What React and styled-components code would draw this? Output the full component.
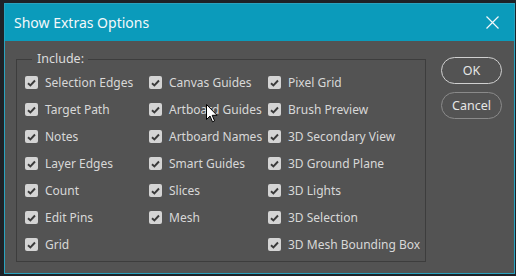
import React from "react";
import styled, { createGlobalStyle } from "styled-components";

const Global = createGlobalStyle`
  html, body { margin: 0; padding: 0; background: #1e2227; }
  body { font-family: "Noto Sans", "Open Sans", sans-serif; }
`;

const columns = [
  ["Selection Edges", "Target Path", "Notes", "Layer Edges", "Count", "Edit Pins", "Grid"],
  ["Canvas Guides", "Artboard Guides", "Artboard Names", "Smart Guides", "Slices", "Mesh"],
  [
    "Pixel Grid",
    "Brush Preview",
    "3D Secondary View",
    "3D Ground Plane",
    "3D Lights",
    "3D Selection",
    "3D Mesh Bounding Box",
  ],
];

const Window = styled.div`
  position: relative;
  margin: 3px 1px 0 4px;
  width: 509px;
  height: 269px;
  border: 1px solid #2aa3bf;
  background: #535353;
  display: flex;
  flex-direction: column;
`;

const TitleBar = styled.div`
  height: 37px;
  background: #0b9bbb;
  display: flex;
  align-items: center;
  justify-content: space-between;
  padding: 0 15px 0 9px;
  color: #f4f8fa;
  font-size: 14px;
`;

const Body = styled.div`
  flex: 1;
  display: flex;
  padding: 11px 0 0 11px;
  gap: 15px;
`;

const Group = styled.fieldset`
  margin: 0;
  width: 410px;
  height: 210px;
  box-sizing: border-box;
  border: 1px solid #3d3d3d;
  padding: 3px 0 0 8px;
  display: grid;
  grid-template-columns: 124px 119px 1fr;
  align-content: start;
`;

const Legend = styled.legend`
  margin-left: 7px;
  padding: 0 4px 0 5px;
  color: #dcdcdc;
  font-size: 12.5px;
  line-height: 14px;
`;

const Column = styled.div`
  display: flex;
  flex-direction: column;
`;

const Row = styled.label`
  height: 27px;
  display: flex;
  align-items: center;
  gap: 7px;
  color: #d8d8d8;
  font-size: 12px;
  white-space: nowrap;
`;

const Box = styled.span`
  width: 13px;
  height: 13px;
  border-radius: 2px;
  background: #d4d4d4;
  display: flex;
  align-items: center;
  justify-content: center;
  flex: none;
`;

const Buttons = styled.div`
  display: flex;
  flex-direction: column;
  gap: 8px;
  padding-top: 5px;
`;

const Button = styled.button`
  width: 61px;
  height: 27px;
  border-radius: 14px;
  background: transparent;
  border: 1px solid ${(p) => (p.$primary ? "#d0d0d0" : "#8a8a8a")};
  color: #e6e6e6;
  font-family: inherit;
  font-size: 12.5px;
  padding: 0;
`;

const Cursor = styled.svg`
  position: absolute;
  left: 201px;
  top: 100px;
`;

const Check = () => (
  <svg width="9" height="8" viewBox="0 0 9 8">
    <path d="M1 4.2 L3.4 6.5 L8 1.5" fill="none" stroke="#3a3a3a" strokeWidth="1.9" />
  </svg>
);

export default function App() {
  return (
    <>
      <Global />
      <Window>
        <TitleBar>
          <span>Show Extras Options</span>
          <svg width="13" height="13" viewBox="0 0 13 13">
            <path d="M0.5 0.5 L12.5 12.5 M12.5 0.5 L0.5 12.5" stroke="#f4f8fa" strokeWidth="1.2" />
          </svg>
        </TitleBar>
        <Body>
          <Group>
            <Legend>Include:</Legend>
            {columns.map((col, i) => (
              <Column key={i}>
                {col.map((name) => (
                  <Row key={name}>
                    <Box>
                      <Check />
                    </Box>
                    {name}
                  </Row>
                ))}
              </Column>
            ))}
          </Group>
          <Buttons>
            <Button $primary>OK</Button>
            <Button>Cancel</Button>
          </Buttons>
        </Body>
        <Cursor width="12" height="19" viewBox="0 0 12 19">
          <path d="M0.5 0.5 L0.5 15.5 L4 12 L6.5 17.8 L8.6 16.9 L6.2 11.3 L11 11.3 Z" fill="#ffffff" stroke="#000" strokeWidth="1" />
        </Cursor>
      </Window>
    </>
  );
}
